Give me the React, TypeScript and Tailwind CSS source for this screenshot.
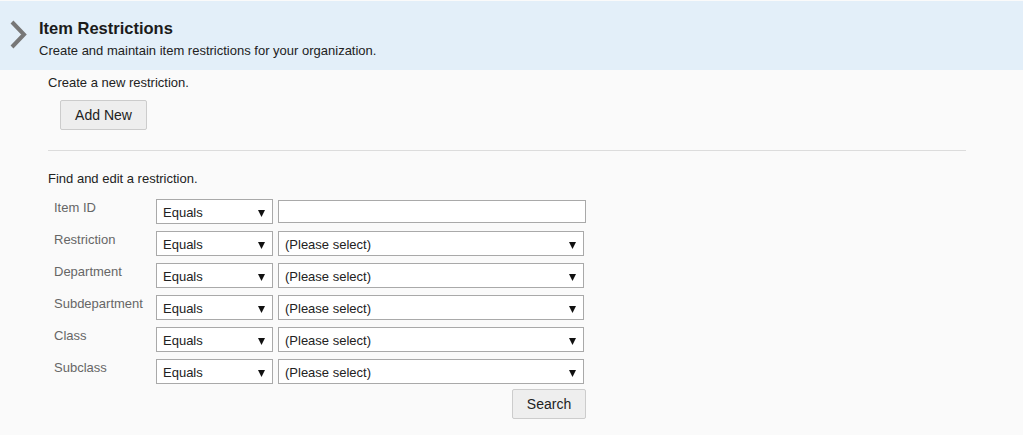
const fields = ['Restriction', 'Department', 'Subdepartment', 'Class', 'Subclass'];

function Arrow() {
  return (
    <svg width="7" height="8" viewBox="0 0 7 8" className="shrink-0">
      <polygon points="0,1 7,1 3.5,8" fill="#111" />
    </svg>
  );
}

function FakeSelect({ value, width }: { value: string; width: string }) {
  return (
    <div
      className={`${width} h-[25px] bg-white border border-[#a9a9a9] flex items-center justify-between pl-[6px] pr-[7px] pt-[2px] text-[13px] text-[#222]`}
    >
      <span>{value}</span>
      <Arrow />
    </div>
  );
}

function Row({ label, children }: { label: string; children: React.ReactNode }) {
  return (
    <div className="flex items-start h-[25px]">
      <div className="w-[102px] text-[13px] leading-4 pt-[1px] text-[#666]">{label}</div>
      <FakeSelect value="Equals" width="w-[117px]" />
      <div className="ml-[5px] flex items-center h-[25px]">{children}</div>
    </div>
  );
}

export default function App() {
  return (
    <div
      className="w-[1023px] h-[435px] bg-[#fafafa] pt-px overflow-hidden"
      style={{ fontFamily: '"Liberation Sans", Arial, sans-serif' }}
    >
      {/* Page header */}
      <div className="h-[69px] bg-[#e3eff9] flex items-start pl-[10px] pt-[17px]">
        <svg width="18" height="29" viewBox="0 0 18 29" className="mt-[2px]">
          <polyline points="2,2 14,14.5 2,27" fill="none" stroke="#777" strokeWidth="4" />
        </svg>
        <div className="ml-[11px]">
          <h1 className="text-[16.5px] leading-5 font-bold text-[#1b1b1b]">Item Restrictions</h1>
          <p className="text-[13px] leading-4 text-[#222] mt-[5px]">
            Create and maintain item restrictions for your organization.
          </p>
        </div>
      </div>

      <div className="pl-[48px] pr-[57px] pt-[5px]">
        <p className="text-[13px] leading-4 text-[#222]">Create a new restriction.</p>
        <button className="mt-[9px] ml-[12px] w-[87px] h-[30px] bg-[#eeeeee] border border-[#cccccc] rounded-[2px] text-[14px] text-[#222]">
          Add New
        </button>

        <div className="mt-[20px] border-t border-[#dcdcdc]" />

        <p className="mt-[20px] text-[13px] leading-4 text-[#222]">Find and edit a restriction.</p>

        <div className="mt-[12px] ml-[6px] w-[532px] flex flex-col gap-[7px]">
          <Row label="Item ID">
            <div className="w-[308px] h-[23px] bg-white border border-[#a9a9a9]" />
          </Row>
          {fields.map((f) => (
            <Row key={f} label={f}>
              <FakeSelect value="(Please select)" width="w-[306px]" />
            </Row>
          ))}
          <div className="flex justify-end -mt-[2px]">
            <button className="w-[74px] h-[30px] bg-[#eeeeee] border border-[#cccccc] rounded-[2px] text-[14px] text-[#222]">
              Search
            </button>
          </div>
        </div>
      </div>
    </div>
  );
}
